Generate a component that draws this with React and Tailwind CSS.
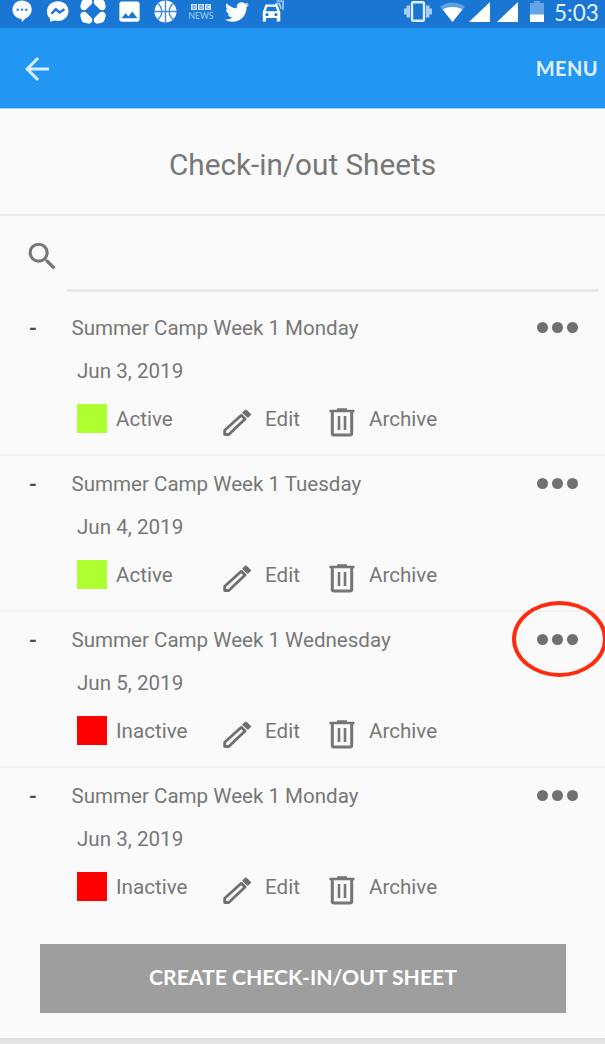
import { MdArrowBack, MdSearch, MdImage } from 'react-icons/md';
import { FaTwitter } from 'react-icons/fa';

const sheets = [
  { id: 1, name: 'Summer Camp Week 1 Monday', date: 'Jun 3, 2019', active: true },
  { id: 2, name: 'Summer Camp Week 1 Tuesday', date: 'Jun 4, 2019', active: true },
  { id: 3, name: 'Summer Camp Week 1 Wednesday', date: 'Jun 5, 2019', active: false, marked: true },
  { id: 4, name: 'Summer Camp Week 1 Monday', date: 'Jun 3, 2019', active: false },
];

function ChatIcon() {
  return (
    <svg width="22" height="24" viewBox="0 0 22 24" fill="none">
      <path d="M10 .5c5.500 0 9.700 3.800 9.700 8.900 0 4.200-2.800 7.300-6.200 8.800L10 22l-.7-3.300C4.200 18.400.5 14.800.5 9.700.5 4.400 4.500.5 10 .5Z" fill="#fff" />
      <g fill="#3b86dc">
        <circle cx="5.700" cy="9.700" r="1.300" /><circle cx="10" cy="9.700" r="1.300" /><circle cx="14.300" cy="9.700" r="1.300" />
      </g>
    </svg>
  );
}

function MessengerIcon() {
  return (
    <svg width="24" height="24" viewBox="0 0 24 24" fill="none">
      <path d="M12 1.200c6 0 10.500 4.200 10.500 9.900S18 21 12 21c-1.200 0-2.200-.2-3.200-.5L4 21.800v-3.300c-2-1.700-3-4.200-3-7.300C1 5.400 6 1.200 12 1.200Z" fill="#fff" />
      <path d="m5.500 13.800 4.300-4.600 3.700 3.300 5-3.300" stroke="#1976d2" strokeWidth="2.400" />
    </svg>
  );
}

function ClusterIcon() {
  return (
    <svg width="26" height="26" viewBox="0 0 26 26" fill="#fff">
      {[0, 90, 180, 270].map(a => (
        <path
          key={a}
          transform={`rotate(${a} 13 13)`}
          d="M4.500 1.200 8 .4Q11 0 12 2.500 12.800 4.500 11.500 6.200L6.200 11.500Q4.500 12.800 2.500 12 0 11 .4 8L1.200 4.500Q2 2 4.500 1.200Z"
        />
      ))}
    </svg>
  );
}

function BasketballIcon() {
  return (
    <svg width="23" height="23" viewBox="0 0 23 23" fill="none" stroke="#3f8bde" strokeWidth="1.400">
      <circle cx="11.500" cy="11.500" r="11" fill="#fff" stroke="none" />
      <path d="M11.500 0v23M0 11.500h23M4 3.500c5 4.500 5 11.500 0 16M19 3.500c-5 4.500-5 11.500 0 16" />
    </svg>
  );
}

function CarIcon() {
  return (
    <svg width="24" height="22" viewBox="0 0 24 22" fill="none">
      <path d="M14.500 1.200h6.500v8.500" stroke="#8dbbee" strokeWidth="2" />
      <path d="M13 3.800h4.500l1.500 5" stroke="#b7d4f4" strokeWidth="1.500" />
      <path fillRule="evenodd" d="M3.500 4.500h11.800L18.300 12v9.500h-3.500V18H4v3.500H.8V12L3.500 4.500Zm1.700 2.200L3.700 11.200h11.600l-1.600-4.500H5.200ZM5 13a1.600 1.600 0 1 0 0 3.200A1.600 1.600 0 0 0 5 13Zm9 0a1.600 1.600 0 1 0 0 3.200A1.600 1.600 0 0 0 14 13Z" fill="#fff" />
    </svg>
  );
}

function VibrateIcon() {
  return (
    <svg width="28" height="21" viewBox="0 0 28 21" fill="none">
      <path d="M0 7.500h2.500V4.500h3.500v12H2.500v-3H0ZM28 7.500h-2.500V4.500H22v12h3.500v-3H28Z" fill="#a9cdf3" />
      <rect x="8" y="1.300" width="12" height="18.400" rx="1.500" stroke="#e1eefb" strokeWidth="2.400" />
    </svg>
  );
}

function WifiIcon() {
  return (
    <svg width="26" height="22" viewBox="0 0 26 22">
      <path d="M0 4.500Q12.500-3.500 25 4.500L12.500 20Z" fill="#5e9fe3" />
      <path d="M2.500 7.200Q12.500 2.800 22.500 7.200L12.500 20Z" fill="#fff" />
    </svg>
  );
}

function SignalIcon() {
  return (
    <svg width="21" height="20" viewBox="0 0 21 20" fill="#fff">
      <path d="M21 0v20H0Z" />
    </svg>
  );
}

function BatteryIcon() {
  return (
    <svg width="14" height="21" viewBox="0 0 14 21">
      <path d="M4 0h6v2h4v12H0V2h4Z" fill="#64a3e5" />
      <path d="M0 13.500h14V21H0Z" fill="#fff" />
    </svg>
  );
}

function PencilIcon() {
  return (
    <svg width="30" height="29" viewBox="0 0 30 29" fill="none" stroke="#6f6f6f" strokeWidth="2.800" strokeLinejoin="round">
      <path d="M2.700 26.500v-4.300L19.300 7.300l3.800 3.800L6.800 26.500Z" />
      <path d="m24 2.200 4.500 4.300-2.700 2.500-4.700-4.400Z" fill="#6f6f6f" strokeWidth="1.500" />
    </svg>
  );
}

function TrashIcon() {
  return (
    <svg width="26" height="29" viewBox="0 0 26 29" fill="none" stroke="#757575">
      <path d="M.5 2.900h25M8 1.600h10" strokeWidth="2.500" />
      <path d="M3.300 3v22.300q0 1.700 1.700 1.700h16q1.700 0 1.700-1.700V3" strokeWidth="3" />
      <path d="M10 8v14M16 8v14" strokeWidth="2.600" />
    </svg>
  );
}

function StatusBar() {
  return (
    <div className="flex h-7 items-start justify-between bg-[#1976d2] pl-3 pr-[7px] text-white">
      <div className="flex items-start">
        <div className="w-[34px]"><ChatIcon /></div>
        <div className="w-[34px]"><MessengerIcon /></div>
        <div className="-mt-[2px] w-[36px]"><ClusterIcon /></div>
        <MdImage className="-mt-[2px] mr-[11px] size-[27px]" />
        <div className="mr-[11px]"><BasketballIcon /></div>
        <div className="mt-1 mr-[11px] flex w-[26px] flex-col items-center font-['Lato'] text-[#a9cdf3]">
          <div className="flex h-[6px] gap-px text-[6px] leading-[6px] font-black text-[#5f9fe3]">
            <span className="w-[6px] bg-[#d4e6fa] text-center">B</span>
            <span className="w-[6px] bg-[#d4e6fa] text-center">B</span>
            <span className="w-[6px] bg-[#d4e6fa] text-center">C</span>
          </div>
          <span className="mt-[2px] text-[8.500px] leading-[9px]">NEWS</span>
        </div>
        <FaTwitter className="mr-[13px] size-[24px]" />
        <CarIcon />
      </div>
      <div className="flex items-start">
        <div className="mt-px mr-[8px]"><VibrateIcon /></div>
        <div className="mt-[2px] mr-[3px]"><WifiIcon /></div>
        <div className="mt-[2px] mr-[7px]"><SignalIcon /></div>
        <div className="mt-[2px] mr-3"><SignalIcon /></div>
        <div className="mt-px mr-[10px]"><BatteryIcon /></div>
        <span className="w-[44px] text-right font-['Lato'] text-[22.500px] leading-[26px] whitespace-nowrap text-[#e3effb]">5:03</span>
      </div>
    </div>
  );
}

function SheetRow({ sheet }) {
  return (
    <div className="h-[156px] border-b-2 border-[#f2f2f2] pt-[13px] last:border-b-0">
      <div className="flex h-[30px] items-center">
        <span className="w-[71.500px] pl-[29px] text-xl font-bold text-[#4a4a4a]">-</span>
        <span className="flex-1 text-[20.550px] whitespace-nowrap">{sheet.name}</span>
        <div className="relative mr-[27px] -mt-px flex gap-[4px]">
          <i className="size-[11px] rounded-full bg-[#707070]" />
          <i className="size-[11px] rounded-full bg-[#707070]" />
          <i className="size-[11px] rounded-full bg-[#707070]" />
          {sheet.marked && (
            <span className="absolute -top-[33px] -left-[25px] h-[76px] w-[95px] rounded-[50%] border-4 border-[#fb2c10]" />
          )}
        </div>
      </div>
      <div className="mt-[13px] h-[30px] pl-[77px] text-[20.600px] leading-[30px]">{sheet.date}</div>
      <div className="mt-[18px] flex h-[30px] pl-[77px] text-[20.600px] leading-[30px]">
        <div className={sheet.active ? 'mr-[9px] h-[29px] w-[30px] bg-[#adff2f]' : 'mr-[9px] h-[29px] w-[30px] bg-[#ff0000]'} />
        <span className="w-[106px]">{sheet.active ? 'Active' : 'Inactive'}</span>
        <div className="mt-[4px] w-[43px]"><PencilIcon /></div>
        <span className="w-[64px]">Edit</span>
        <div className="mt-[4px] w-[40px]"><TrashIcon /></div>
        <span>Archive</span>
      </div>
    </div>
  );
}

export default function App() {
  return (
    <div className="h-[1044px] w-[605px] overflow-hidden bg-[#fafafa] font-['Roboto',sans-serif] text-[#777]">
      <StatusBar />
      <header className="flex h-[81px] items-center justify-between border-b border-[#a5d2fa] bg-[#2196f3] pr-[7px] pl-[19px]">
        <MdArrowBack className="mt-px size-9 text-[#d8edff]" />
        <span className="font-['Lato'] text-[20px] font-bold tracking-[0.4px] text-[#e0f0ff]">MENU</span>
      </header>
      <h1 className="flex h-[107px] items-center justify-center border-b-2 border-[#ebebeb] pt-2 text-[29.700px]">
        Check-in/out Sheets
      </h1>
      <div className="flex h-[84px] pr-[6px] pl-[24px]">
        <MdSearch className="mt-[22px] size-[37px] text-[#777]" />
        <div className="ml-[6px] h-[76px] flex-1 border-b-[3px] border-[#e9e9e9]" />
      </div>
      <main>
        {sheets.map(s => <SheetRow key={s.id} sheet={s} />)}
      </main>
      <button className="mt-[20px] ml-10 block h-[69px] w-[526px] bg-[#9e9e9e] pb-px font-['Lato'] text-[21.150px] font-bold text-white">
        CREATE CHECK-IN/OUT SHEET
      </button>
      <div className="mt-[25px] h-2 bg-linear-to-b from-[#dedede] to-[#ececec]" />
    </div>
  );
}
